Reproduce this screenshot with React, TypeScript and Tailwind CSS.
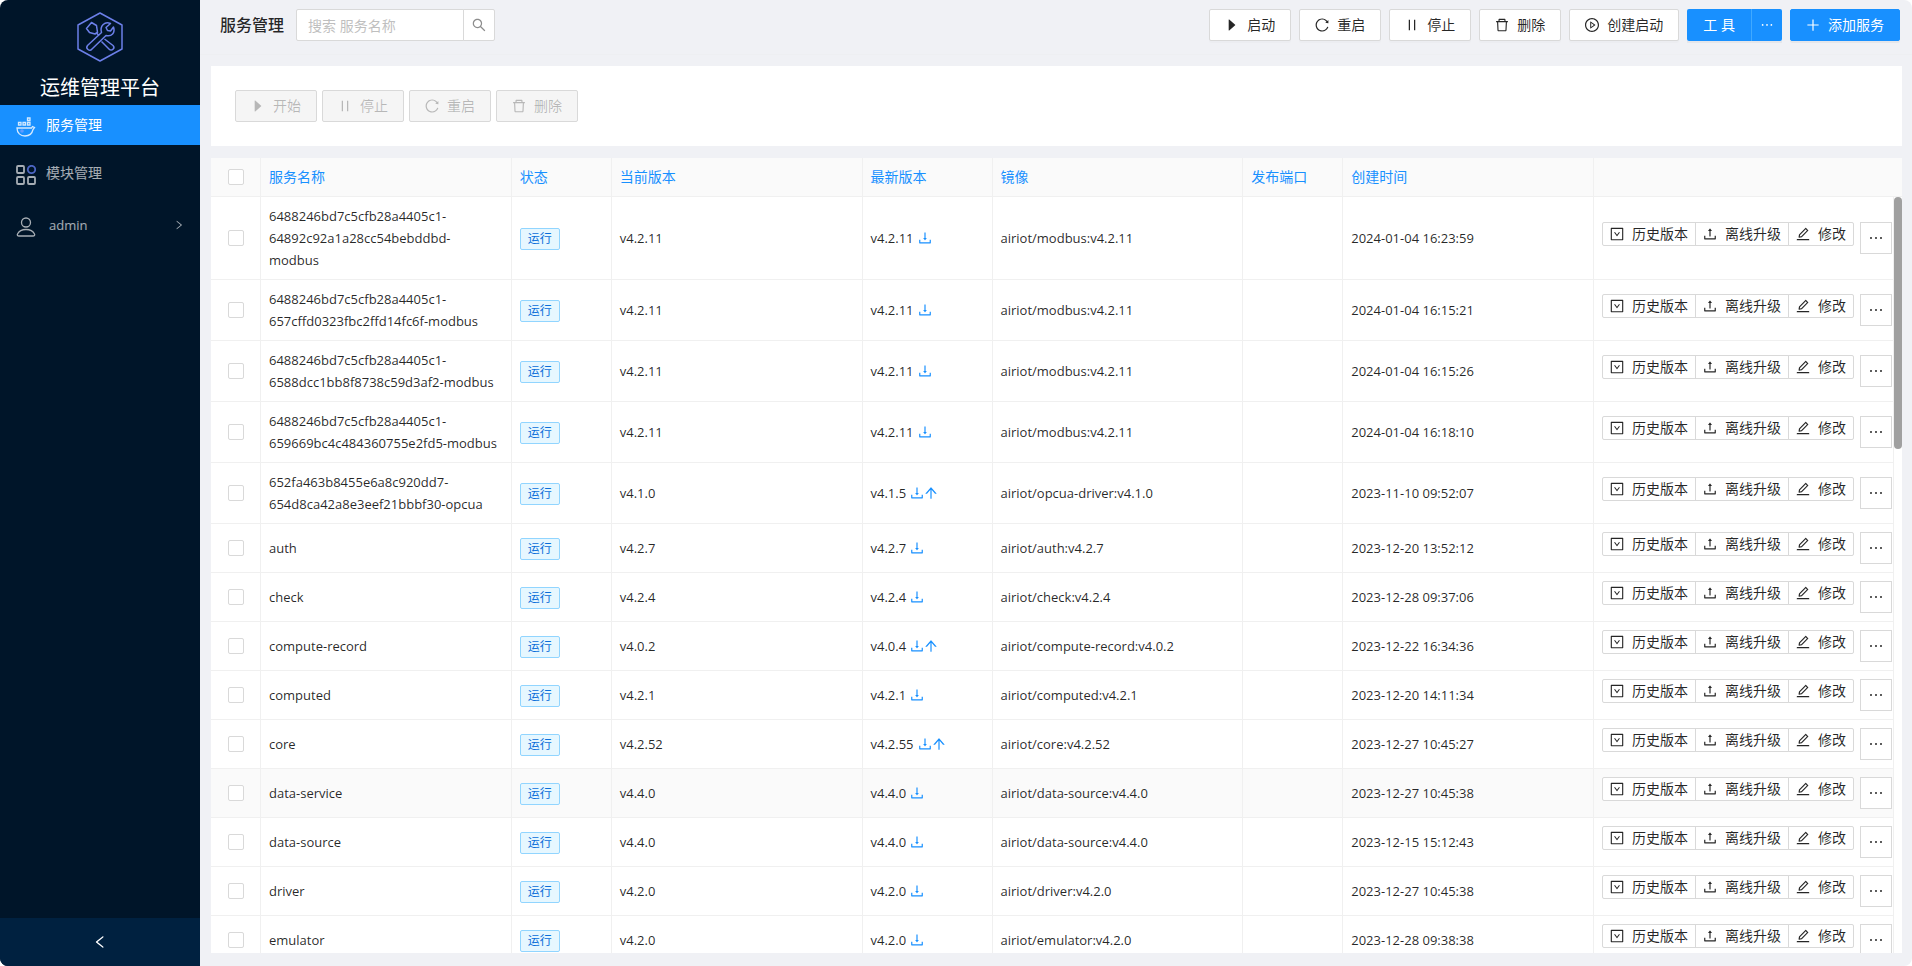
import type { ReactNode } from "react";
import { clsx } from "clsx";
import type { IconType } from "react-icons";
import {
	AiOutlineArrowUp,
	AiOutlineCaretRight,
	AiOutlineDelete,
	AiOutlineDownload,
	AiOutlineDownSquare,
	AiOutlineEdit,
	AiOutlineEllipsis,
	AiOutlineLeft,
	AiOutlinePause,
	AiOutlinePlayCircle,
	AiOutlinePlus,
	AiOutlineReload,
	AiOutlineRight,
	AiOutlineSearch,
	AiOutlineUpload,
} from "react-icons/ai";

interface Service {
	name: string;
	current: string;
	latest: string;
	image: string;
	createdAt: string;
	hovered?: boolean;
}

const services: Service[] = [
	{ name: "6488246bd7c5cfb28a4405c1-64892c92a1a28cc54bebddbd-modbus", current: "v4.2.11", latest: "v4.2.11", image: "airiot/modbus:v4.2.11", createdAt: "2024-01-04 16:23:59" },
	{ name: "6488246bd7c5cfb28a4405c1-657cffd0323fbc2ffd14fc6f-modbus", current: "v4.2.11", latest: "v4.2.11", image: "airiot/modbus:v4.2.11", createdAt: "2024-01-04 16:15:21" },
	{ name: "6488246bd7c5cfb28a4405c1-6588dcc1bb8f8738c59d3af2-modbus", current: "v4.2.11", latest: "v4.2.11", image: "airiot/modbus:v4.2.11", createdAt: "2024-01-04 16:15:26" },
	{ name: "6488246bd7c5cfb28a4405c1-659669bc4c484360755e2fd5-modbus", current: "v4.2.11", latest: "v4.2.11", image: "airiot/modbus:v4.2.11", createdAt: "2024-01-04 16:18:10" },
	{ name: "652fa463b8455e6a8c920dd7-654d8ca42a8e3eef21bbbf30-opcua", current: "v4.1.0", latest: "v4.1.5", image: "airiot/opcua-driver:v4.1.0", createdAt: "2023-11-10 09:52:07" },
	{ name: "auth", current: "v4.2.7", latest: "v4.2.7", image: "airiot/auth:v4.2.7", createdAt: "2023-12-20 13:52:12" },
	{ name: "check", current: "v4.2.4", latest: "v4.2.4", image: "airiot/check:v4.2.4", createdAt: "2023-12-28 09:37:06" },
	{ name: "compute-record", current: "v4.0.2", latest: "v4.0.4", image: "airiot/compute-record:v4.0.2", createdAt: "2023-12-22 16:34:36" },
	{ name: "computed", current: "v4.2.1", latest: "v4.2.1", image: "airiot/computed:v4.2.1", createdAt: "2023-12-20 14:11:34" },
	{ name: "core", current: "v4.2.52", latest: "v4.2.55", image: "airiot/core:v4.2.52", createdAt: "2023-12-27 10:45:27" },
	{ name: "data-service", current: "v4.4.0", latest: "v4.4.0", image: "airiot/data-source:v4.4.0", createdAt: "2023-12-27 10:45:38", hovered: true },
	{ name: "data-source", current: "v4.4.0", latest: "v4.4.0", image: "airiot/data-source:v4.4.0", createdAt: "2023-12-15 15:12:43" },
	{ name: "driver", current: "v4.2.0", latest: "v4.2.0", image: "airiot/driver:v4.2.0", createdAt: "2023-12-27 10:45:38" },
	{ name: "emulator", current: "v4.2.0", latest: "v4.2.0", image: "airiot/emulator:v4.2.0", createdAt: "2023-12-28 09:38:38" },
];

const headers = ["服务名称", "状态", "当前版本", "最新版本", "镜像", "发布端口", "创建时间", ""];

const cell = "border-r border-b border-[#f0f0f0] py-2 px-2";

// Ant Design crops the 64-unit margin that its glyphs have
function Icon({ as: Glyph, className = "size-[14px]" }: { as: IconType; className?: string }) {
	return <Glyph viewBox="64 64 896 896" className={clsx("shrink-0", className)} />;
}

function Button({ icon, children, primary, disabled }: { icon: IconType; children: ReactNode; primary?: boolean; disabled?: boolean }) {
	return (
		<button
			type="button"
			disabled={disabled}
			className={clsx(
				"flex h-8 items-center gap-2 rounded-xs border px-[15px] whitespace-nowrap",
				primary && "border-[#1890ff] bg-[#1890ff] text-white shadow-[0_2px_0_rgba(0,0,0,0.045)]",
				disabled && "border-[#d9d9d9] bg-[#f5f5f5] text-black/25",
				!primary && !disabled && "border-[#d9d9d9] bg-white text-black/85 shadow-[0_2px_0_rgba(0,0,0,0.015)]",
			)}
		>
			<Icon as={icon} />
			<span>{children}</span>
		</button>
	);
}

function SmallButton({ icon, children }: { icon: IconType; children: ReactNode }) {
	return (
		<button
			type="button"
			className="-ml-px flex h-6 items-center gap-2 border border-[#d9d9d9] bg-white px-[7px] whitespace-nowrap first:ml-0 first:rounded-l-xs last:rounded-r-xs"
		>
			<Icon as={icon} />
			<span>{children}</span>
		</button>
	);
}

function Checkbox({ label }: { label: string }) {
	return (
		<input
			type="checkbox"
			aria-label={label}
			className="mx-auto block h-4 w-4 appearance-none rounded-xs border border-[#d9d9d9] bg-white checked:bg-[#1890ff]"
		/>
	);
}

function Columns({ last }: { last: string }) {
	return (
		<colgroup>
			<col className="w-[50px]" />
			<col />
			<col className="w-[100px]" />
			<col />
			<col className="w-[130px]" />
			<col />
			<col className="w-[100px]" />
			<col />
			<col className={last} />
		</colgroup>
	);
}

function Logo() {
	return (
		<svg width="46" height="50" viewBox="0 0 46 50" fill="none" stroke="#6b7fe8" strokeWidth="1.5" strokeLinejoin="round">
			<path d="M23 1 L45 13 V37 L23 49 L1 37 V13 Z" />
			<path d="M9.500 16.500 L14.500 10.500 L19.500 13.500 L20.500 20.500 L18 22 L12.500 20.500 Z" />
			<path d="M19 20.500 L22 23.500 M27.500 27 L36 33.500 a2.600 2.600 0 0 1 -3.800 3.800 L24.500 29.500" />
			<path d="M10.500 33.500 L24.500 20.500 C22.500 13.500 28 9 33.500 11.500 L29 15.500 L30.500 18.500 L33.500 19 L36.500 15 C38.500 21 34.500 25 29 23.500 L15 37 a2.700 2.700 0 0 1 -4.500 -3.500 Z" />
		</svg>
	);
}

function DockerIcon() {
	return (
		<svg width="20" height="20" viewBox="0 0 20 20" fill="none" stroke="#d3e9ff" strokeWidth="1.300">
			<path d="M2.500 5.500 h2.500 v2.500 h-2.500 z M7 5.500 h2.500 v2.500 h-2.500 z M11.500 5.500 h2.500 v2.500 h-2.500 z M11.500 1 h2.500 v2.500 h-2.500 z" />
			<path d="M1 11 H15.500 L16.500 9.500 L18.500 10.500 L17 12.500 C16 17 13 19 9 19 C4.500 19 1 16 1 11 Z" />
			<circle cx="6" cy="14" r="1.800" fill="#5e9bff" stroke="none" />
		</svg>
	);
}

function ModulesIcon() {
	return (
		<svg width="20" height="20" viewBox="0 0 20 20" fill="none" stroke="#a6adb4" strokeWidth="1.800">
			<rect x="1" y="1" width="7" height="7" rx="1" />
			<rect x="1" y="12" width="7" height="7" rx="1" />
			<rect x="12" y="12" width="7" height="7" rx="1" />
			<circle cx="15.500" cy="4.500" r="3.700" stroke="#4c66c4" />
		</svg>
	);
}

function AdminIcon() {
	return (
		<svg width="20" height="20" viewBox="0 0 20 20" fill="none" stroke="#a6adb4" strokeWidth="1.300">
			<circle cx="10" cy="5.500" r="4.500" />
			<path d="M3 19 H17 C18.500 19 19 18 18.500 17 C17 14 14.500 12.500 10 12.500 C5.500 12.500 3 14 1.500 17 C1 18 1.500 19 3 19 Z" />
		</svg>
	);
}

function Sidebar() {
	return (
		<aside className="flex w-[200px] shrink-0 flex-col bg-[#001529] text-white/65">
			<div className="flex h-[105px] flex-col items-center gap-[10px] pt-3 text-white">
				<Logo />
				<div className="text-xl leading-8">运维管理平台</div>
			</div>
			<nav className="flex flex-col">
				<a href="#services" className="flex h-10 items-center gap-[10px] bg-[#1890ff] px-4 text-white">
					<span className="pt-1"><DockerIcon /></span>
					<span className="pb-px">服务管理</span>
				</a>
				<a href="#modules" className="mt-2 flex h-10 items-center gap-[10px] px-4">
					<span className="pt-1"><ModulesIcon /></span>
					<span className="pb-px">模块管理</span>
				</a>
				<a href="#admin" className="mt-3 flex h-10 items-center gap-[13px] px-4">
					<span className="pt-1"><AdminIcon /></span>
					<span className="flex-1 text-[13px]">admin</span>
					<Icon as={AiOutlineRight} className="size-[10px]" />
				</a>
			</nav>
			<button type="button" aria-label="收起" className="mt-auto flex h-12 items-center justify-center bg-[#002140] text-white">
				<Icon as={AiOutlineLeft} />
			</button>
		</aside>
	);
}

function ServiceRow({ service }: { service: Service }) {
	return (
		<tr className={service.hovered ? "bg-[#fafafa]" : "bg-white"}>
			<td className={cell}><Checkbox label={service.name} /></td>
			<td className="border-r border-b border-[#f0f0f0] py-2 pr-3 pl-2">{service.name}</td>
			<td className={cell}>
				<span className="inline-block rounded-xs border border-[#91d5ff] bg-[#e6f7ff] px-[7px] align-middle text-xs leading-5 text-[#096dd9]">运行</span>
			</td>
			<td className={cell}>{service.current}</td>
			<td className={cell}>
				<div className="flex items-center text-[#1890ff]">
					<span className="mr-1 text-black/85">{service.latest}</span>
					<Icon as={AiOutlineDownload} />
					{service.latest !== service.current && <Icon as={AiOutlineArrowUp} />}
				</div>
			</td>
			<td className={cell}>{service.image}</td>
			<td className={cell}></td>
			<td className={cell}>{service.createdAt}</td>
			<td className="border-r border-b border-[#f0f0f0] py-2 pl-2">
				<div className="flex items-start gap-[6px] text-sm">
					<div className="flex">
						<SmallButton icon={AiOutlineDownSquare}>历史版本</SmallButton>
						<SmallButton icon={AiOutlineUpload}>离线升级</SmallButton>
						<SmallButton icon={AiOutlineEdit}>修改</SmallButton>
					</div>
					<button type="button" aria-label="更多" className="flex h-8 w-8 items-center justify-center border border-[#d9d9d9] bg-white">
						<Icon as={AiOutlineEllipsis} className="size-4" />
					</button>
				</div>
			</td>
		</tr>
	);
}

export default function App() {
	return (
		<div className="flex h-screen overflow-hidden rounded-lg bg-[#f0f1f5] font-['Open_Sans','Noto_Sans_CJK_SC',sans-serif] text-sm leading-[22px] text-black/85">
			<Sidebar />
			<div className="flex min-w-0 flex-1 flex-col">
				{/* Page header */}
				<header className="flex h-[55px] shrink-0 items-start justify-between border-b border-[#eeeff2] pt-[9px] pr-3 pl-5">
					<div className="flex items-center gap-3">
						<h1 className="text-base font-medium">服务管理</h1>
						<form className="flex" onSubmit={(e) => e.preventDefault()}>
							<input
								type="text"
								aria-label="搜索 服务名称"
								placeholder="搜索 服务名称"
								className="h-8 w-[168px] rounded-l-xs border border-[#d9d9d9] bg-white px-[11px] outline-none placeholder:text-[#bfbfbf]"
							/>
							<button type="submit" aria-label="搜索" className="-ml-px flex h-8 w-8 items-center justify-center rounded-r-xs border border-[#d9d9d9] bg-white text-black/45">
								<Icon as={AiOutlineSearch} />
							</button>
						</form>
					</div>
					<div className="flex gap-2">
						<Button icon={AiOutlineCaretRight}>启动</Button>
						<Button icon={AiOutlineReload}>重启</Button>
						<Button icon={AiOutlinePause}>停止</Button>
						<Button icon={AiOutlineDelete}>删除</Button>
						<Button icon={AiOutlinePlayCircle}>创建启动</Button>
						<div className="flex text-white shadow-[0_2px_0_rgba(0,0,0,0.045)]">
							<button type="button" className="h-8 rounded-l-xs bg-[#1890ff] px-4">工 具</button>
							<button type="button" aria-label="更多工具" className="flex h-8 w-[31px] items-center justify-center rounded-r-xs border-l border-[#40a9ff] bg-[#1890ff]">
								<Icon as={AiOutlineEllipsis} />
							</button>
						</div>
						<Button primary icon={AiOutlinePlus}>添加服务</Button>
					</div>
				</header>

				<main className="flex min-h-0 flex-1 flex-col gap-3 pt-[11px] pr-[10px] pb-[13px] pl-[11px]">
					{/* Batch actions */}
					<div className="flex gap-[5px] bg-white p-6">
						<Button disabled icon={AiOutlineCaretRight}>开始</Button>
						<Button disabled icon={AiOutlinePause}>停止</Button>
						<Button disabled icon={AiOutlineReload}>重启</Button>
						<Button disabled icon={AiOutlineDelete}>删除</Button>
					</div>

					{/* Services */}
					<div className="flex min-h-0 flex-1 flex-col bg-white">
						<table className="w-full table-fixed border-separate border-spacing-0 bg-[#fafafa]">
							<Columns last="w-[308px]" />
							<thead>
								<tr>
									<th className={cell}><Checkbox label="全选" /></th>
									{headers.map((title, idx) => (
										<th key={idx} className={clsx(cell, "text-left font-normal text-[#1890ff] last:border-r-0")}>
											{title}
										</th>
									))}
								</tr>
							</thead>
						</table>
						<div className="flex min-h-0 flex-1 overflow-hidden">
							<div className="min-w-0 flex-1">
								<table className="w-full table-fixed border-separate border-spacing-0 text-[13px]">
									<Columns last="w-[300px]" />
									<tbody>
										{services.map((service) => (
											<ServiceRow key={service.name} service={service} />
										))}
									</tbody>
								</table>
							</div>
							<div className="h-full w-2 shrink-0">
								<div className="h-1/3 rounded bg-[#a0a0a0]" />
							</div>
						</div>
					</div>
				</main>
			</div>
		</div>
	);
}
